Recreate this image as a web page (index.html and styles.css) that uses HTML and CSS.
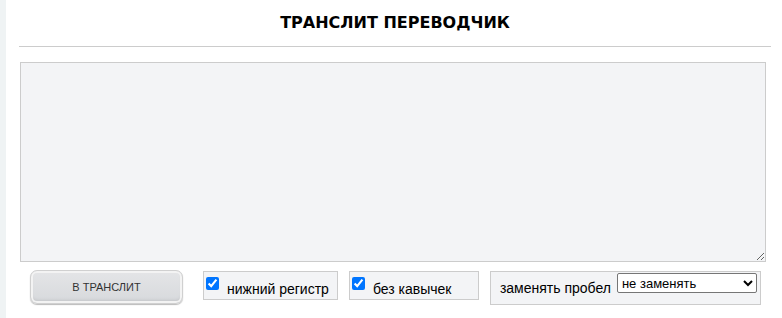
FILE: index.html
```html
<!DOCTYPE html>
<html lang="ru">
<head>
<meta charset="UTF-8" />
<meta name="viewport" content="width=device-width, initial-scale=1" />
<title>Транслит переводчик</title>
<link rel="stylesheet" href="styles.css">
</head>
<body>

<div class="side"></div>

<main class="page">
  <h1>ТРАНСЛИТ ПЕРЕВОДЧИК</h1>

  <textarea id="source" class="source"></textarea>

  <div class="controls">
    <button id="translit-btn" class="translit-button">В ТРАНСЛИТ</button>
    <label class="option">
      <input type="checkbox" id="lower" checked />
      <span>нижний регистр</span>
    </label>
    <label class="option option-quotes">
      <input type="checkbox" id="quotes" checked />
      <span>без кавычек</span>
    </label>
    <div class="option option-space">
      <span>заменять пробел</span>
      <select id="space">
        <option>не заменять</option>
        <option>_</option>
        <option>-</option>
      </select>
    </div>
  </div>
</main>

</body>
</html>
```

FILE: styles.css
```css
html, body {
  margin: 0; padding: 0;
  background: #fff;
}
body {
  font-family: Arial, "Liberation Sans", sans-serif;
  color: #000;
  display: flex;
  min-height: 318px;
}
.side {
  width: 6px;
  flex: none;
  background: #eff3f4;
}
.page {
  width: 752px;
  margin-left: 13px;
}
h1 {
  margin: 0;
  height: 46px;
  line-height: 46px;
  text-align: center;
  font-family: Tahoma, "DejaVu Sans", sans-serif;
  font-size: 16px;
  font-weight: bold;
  border-bottom: 1px solid #ccc;
}
.source {
  display: block;
  box-sizing: border-box;
  width: 746px;
  height: 200px;
  margin: 15px 0 0 1px;
  background: #f3f4f6;
  border: 1px solid #ccc;
  resize: vertical;
}
.controls {
  display: flex;
  align-items: flex-start;
  margin-top: 7px;
  padding-left: 11px;
}
.translit-button {
  width: 153px;
  height: 34px;
  margin-top: 1px;
  border: 1px solid #d0d0d0;
  border-radius: 7px;
  background: linear-gradient(#e4e5e7, #d7d9dc);
  box-shadow: inset 0 0 0 2px #f3f3f3, inset 0 -3px 3px #c4c6c9, 0 1px 1px #bbb;
  font-family: Arial, "Liberation Sans", sans-serif;
  font-size: 11px;
  color: #333;
  cursor: pointer;
}
.option {
  box-sizing: border-box;
  height: 29px;
  margin-left: 20px;
  margin-top: 2px;
  padding: 0 8px 0 1px;
  display: flex;
  align-items: flex-start;
  background: #f3f4f6;
  border: 1px solid #ccc;
  font-size: 14px;
  white-space: nowrap;
}
.option input {
  width: 13px;
  height: 13px;
  margin: 5px 8px 0 1px;
}
.option span {
  padding-top: 9px;
}
.option-quotes {
  width: 130px;
  margin-left: 11px;
}
.option-space {
  width: 271px;
  height: 34px;
  margin-left: 11px;
  padding: 0 0 0 9px;
}
.option-space span {
  padding-top: 8px;
  margin-right: 6px;
}
.option-space select {
  flex: none;
  width: 140px;
  height: 20px;
  margin-top: 1px;
  font-family: Arial, "Liberation Sans", sans-serif;
  font-size: 13px;
  border: 1px solid #767676;
  border-radius: 2px;
  background: #fff;
}
```
